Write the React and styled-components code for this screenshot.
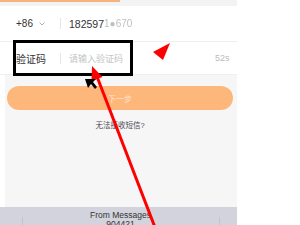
import styled, { createGlobalStyle } from "styled-components";

const Global = createGlobalStyle`
  html, body { margin: 0; padding: 0; background: #fff; }
  body { font-family: "Liberation Sans", "Noto Sans CJK SC", sans-serif; }
`;

const Page = styled.div`
  position: relative;
  width: 300px;
  height: 225px;
  overflow: hidden;
  display: flex;
  background: #fff;
`;

const Phone = styled.div`
  width: 237px;
  height: 225px;
  display: flex;
  flex-direction: column;
  background: #fff;
`;

const TopBand = styled.div`
  height: 6px;
  flex-shrink: 0;
  background: #f3f3f3;
  border-top: 2px solid transparent;
  box-sizing: border-box;
  position: relative;
  &::before {
    content: "";
    position: absolute;
    left: 0;
    top: -2px;
    width: 120px;
    height: 2px;
    background: #f6b27c;
  }
`;

const Row = styled.div`
  height: ${(p) => p.h}px;
  flex-shrink: 0;
  display: flex;
  align-items: center;
  padding: 0 0 0 16px;
  border-bottom: 1px solid #efefef;
  box-sizing: border-box;
  font-size: 10px;
  color: #333;
`;

const Label = styled.div`
  width: 44px;
  display: flex;
  align-items: center;
  gap: 6px;
`;

const Divider = styled.div`
  width: 1px;
  height: 11px;
  background: #e6e6e6;
  margin-right: 8px;
`;

const Phone1 = styled.span`
  font-size: 10.5px;
  color: #333;
`;

const Blur = styled.span`
  font-size: 10px;
  color: #c0c0c0;
  filter: blur(0.7px);
`;

const Placeholder = styled.span`
  flex: 1;
  font-size: 9px;
  color: #c4c4c4;
`;

const Timer = styled.span`
  width: 22px;
  font-size: 9px;
  color: #bcbcbc;
  text-align: left;
`;

const Grey = styled.div`
  flex: 1;
  display: flex;
  flex-direction: column;
  background: #f6f6f6;
  border-left: 5px solid #fff;
  padding: 11px 4px 0 2px;
`;

const Button = styled.div`
  height: 24px;
  border-radius: 12px;
  background: #fdb77b;
  display: flex;
  align-items: center;
  justify-content: center;
  color: #fde5d2;
  font-size: 8px;
`;

const Help = styled.div`
  margin-top: 9px;
  text-align: center;
  font-size: 7.5px;
  color: #4a4a55;
`;

const Footer = styled.div`
  height: 18px;
  flex-shrink: 0;
  background: #d3d3dd;
  display: flex;
  justify-content: center;
  position: relative;
  &::before, &::after {
    content: "";
    position: absolute;
    top: 10px;
    bottom: 0;
    width: 1px;
    background: #c3c3cd;
  }
  &::before { left: 22px; }
  &::after { left: 219px; }
`;

const Msg = styled.div`
  padding-top: 4px;
  text-align: center;
  font-size: 8.5px;
  line-height: 9px;
  color: #333;
  margin-left: 4px;
`;

const Overlay = styled.svg`
  position: absolute;
  left: 0;
  top: 0;
  pointer-events: none;
`;

export default function App() {
  return (
    <Page>
      <Global />
      <Phone>
        <TopBand />
        <Row h={36}>
          <Label>
            +86
            <svg width="6" height="4" viewBox="0 0 6 4">
              <path d="M0.5 0.5 L3 3 L5.5 0.5" fill="none" stroke="#999" strokeWidth="0.8" />
            </svg>
          </Label>
          <Divider />
          <Phone1>182597</Phone1>
          <Blur>1●670</Blur>
        </Row>
        <Row h={33}>
          <Label>验证码</Label>
          <Divider />
          <Placeholder>请输入验证码</Placeholder>
          <Timer>52s</Timer>
        </Row>
        <Grey>
          <Button>下一步</Button>
          <Help>无法接收短信?</Help>
        </Grey>
        <Footer>
          <Msg>
            From Messages
            <br />
            904421
          </Msg>
        </Footer>
      </Phone>
      <Overlay width="300" height="225" viewBox="0 0 300 225">
        <rect x="14.5" y="41.5" width="117" height="33" fill="none" stroke="#000" strokeWidth="3" />
        <polygon points="153,52 170,43 163,60" fill="#f00" />
        <line x1="96" y1="74" x2="156" y2="230" stroke="#f00" strokeWidth="3" />
        <polygon points="92,66 102.5,77 91.5,81" fill="#f00" />
        <polygon points="85,79 96,79 93,82 97,87 95,89 91,84 88,88" fill="#000" />
      </Overlay>
    </Page>
  );
}
